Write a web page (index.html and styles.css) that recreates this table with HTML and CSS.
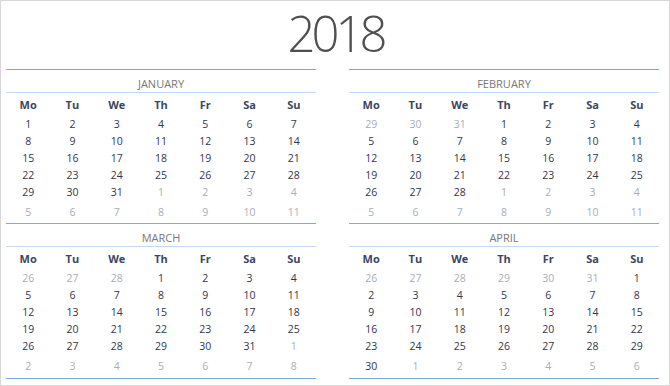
FILE: index.html
```html
<!DOCTYPE html>
<html lang="en">
<head>
<meta charset="utf-8">
<title>2018 Calendar</title>
<link rel="stylesheet" href="styles.css">
</head>
<body>
<div class="page">
  <h1 class="title">2018</h1>
  <div class="grid">
    <section class="month">
      <h2 class="name">JANUARY</h2>
      <div class="week head"><span>Mo</span><span>Tu</span><span>We</span><span>Th</span><span>Fr</span><span>Sa</span><span>Su</span></div>
      <div class="week"><span>1</span><span>2</span><span>3</span><span>4</span><span>5</span><span>6</span><span>7</span></div>
      <div class="week"><span>8</span><span>9</span><span>10</span><span>11</span><span>12</span><span>13</span><span>14</span></div>
      <div class="week"><span>15</span><span>16</span><span>17</span><span>18</span><span>19</span><span>20</span><span>21</span></div>
      <div class="week"><span>22</span><span>23</span><span>24</span><span>25</span><span>26</span><span>27</span><span>28</span></div>
      <div class="week"><span>29</span><span>30</span><span>31</span><span class="off">1</span><span class="off">2</span><span class="off">3</span><span class="off">4</span></div>
      <div class="week extra"><span class="off">5</span><span class="off">6</span><span class="off">7</span><span class="off">8</span><span class="off">9</span><span class="off">10</span><span class="off">11</span></div>
    </section>
    <section class="month">
      <h2 class="name">FEBRUARY</h2>
      <div class="week head"><span>Mo</span><span>Tu</span><span>We</span><span>Th</span><span>Fr</span><span>Sa</span><span>Su</span></div>
      <div class="week"><span class="off">29</span><span class="off">30</span><span class="off">31</span><span>1</span><span>2</span><span>3</span><span>4</span></div>
      <div class="week"><span>5</span><span>6</span><span>7</span><span>8</span><span>9</span><span>10</span><span>11</span></div>
      <div class="week"><span>12</span><span>13</span><span>14</span><span>15</span><span>16</span><span>17</span><span>18</span></div>
      <div class="week"><span>19</span><span>20</span><span>21</span><span>22</span><span>23</span><span>24</span><span>25</span></div>
      <div class="week"><span>26</span><span>27</span><span>28</span><span class="off">1</span><span class="off">2</span><span class="off">3</span><span class="off">4</span></div>
      <div class="week extra"><span class="off">5</span><span class="off">6</span><span class="off">7</span><span class="off">8</span><span class="off">9</span><span class="off">10</span><span class="off">11</span></div>
    </section>
    <section class="month last">
      <h2 class="name">MARCH</h2>
      <div class="week head"><span>Mo</span><span>Tu</span><span>We</span><span>Th</span><span>Fr</span><span>Sa</span><span>Su</span></div>
      <div class="week"><span class="off">26</span><span class="off">27</span><span class="off">28</span><span>1</span><span>2</span><span>3</span><span>4</span></div>
      <div class="week"><span>5</span><span>6</span><span>7</span><span>8</span><span>9</span><span>10</span><span>11</span></div>
      <div class="week"><span>12</span><span>13</span><span>14</span><span>15</span><span>16</span><span>17</span><span>18</span></div>
      <div class="week"><span>19</span><span>20</span><span>21</span><span>22</span><span>23</span><span>24</span><span>25</span></div>
      <div class="week"><span>26</span><span>27</span><span>28</span><span>29</span><span>30</span><span>31</span><span class="off">1</span></div>
      <div class="week extra"><span class="off">2</span><span class="off">3</span><span class="off">4</span><span class="off">5</span><span class="off">6</span><span class="off">7</span><span class="off">8</span></div>
    </section>
    <section class="month last">
      <h2 class="name">APRIL</h2>
      <div class="week head"><span>Mo</span><span>Tu</span><span>We</span><span>Th</span><span>Fr</span><span>Sa</span><span>Su</span></div>
      <div class="week"><span class="off">26</span><span class="off">27</span><span class="off">28</span><span class="off">29</span><span class="off">30</span><span class="off">31</span><span>1</span></div>
      <div class="week"><span>2</span><span>3</span><span>4</span><span>5</span><span>6</span><span>7</span><span>8</span></div>
      <div class="week"><span>9</span><span>10</span><span>11</span><span>12</span><span>13</span><span>14</span><span>15</span></div>
      <div class="week"><span>16</span><span>17</span><span>18</span><span>19</span><span>20</span><span>21</span><span>22</span></div>
      <div class="week"><span>23</span><span>24</span><span>25</span><span>26</span><span>27</span><span>28</span><span>29</span></div>
      <div class="week extra"><span>30</span><span class="off">1</span><span class="off">2</span><span class="off">3</span><span class="off">4</span><span class="off">5</span><span class="off">6</span></div>
    </section>
  </div>
</div>
</body>
</html>
```
FILE: styles.css
```css
* { box-sizing: border-box; }
html, body { margin: 0; padding: 0; background: #ffffff; }
body { font-family: "Open Sans", "Lato", "Liberation Sans", sans-serif; }

.page {
  width: 670px;
  height: 386px;
  border: 1px solid #d7d7d7;
  padding: 3px 0 0 5px;
  overflow: hidden;
}

.title {
  margin: 0 4px 0 0;
  height: 58px;
  line-height: 58px;
  font-size: 49px;
  font-weight: 300;
  color: #505050;
  text-align: center;
  letter-spacing: -4px;
}

.grid {
  margin-top: 7px;
  display: grid;
  grid-template-columns: 310px 310px;
  column-gap: 33px;
}

.month {
  border-top: 1px solid #7fa9dd;
  padding-bottom: 2px;
}
.month.last {
  border-bottom: 1px solid #7fa9dd;
  padding-bottom: 3px;
}

.name {
  margin: 0;
  padding: 7px 0 1px;
  height: 14px;
  box-sizing: content-box;
  line-height: 14px;
  font-size: 11px;
  font-weight: 400;
  color: #777777;
  text-align: center;
  border-bottom: 1px solid #c3d8f2;
}

.week {
  display: grid;
  grid-template-columns: repeat(7, 1fr);
  height: 17px;
  line-height: 17px;
  font-size: 10.5px;
  color: #33364a;
  text-align: center;
}
.week.head {
  margin-top: 3px;
  margin-bottom: 3px;
  font-size: 11px;
  font-weight: 700;
  color: #3c4660;
}
.week.extra { margin-top: 3px; }
.off { color: #a8adb9; }
```
